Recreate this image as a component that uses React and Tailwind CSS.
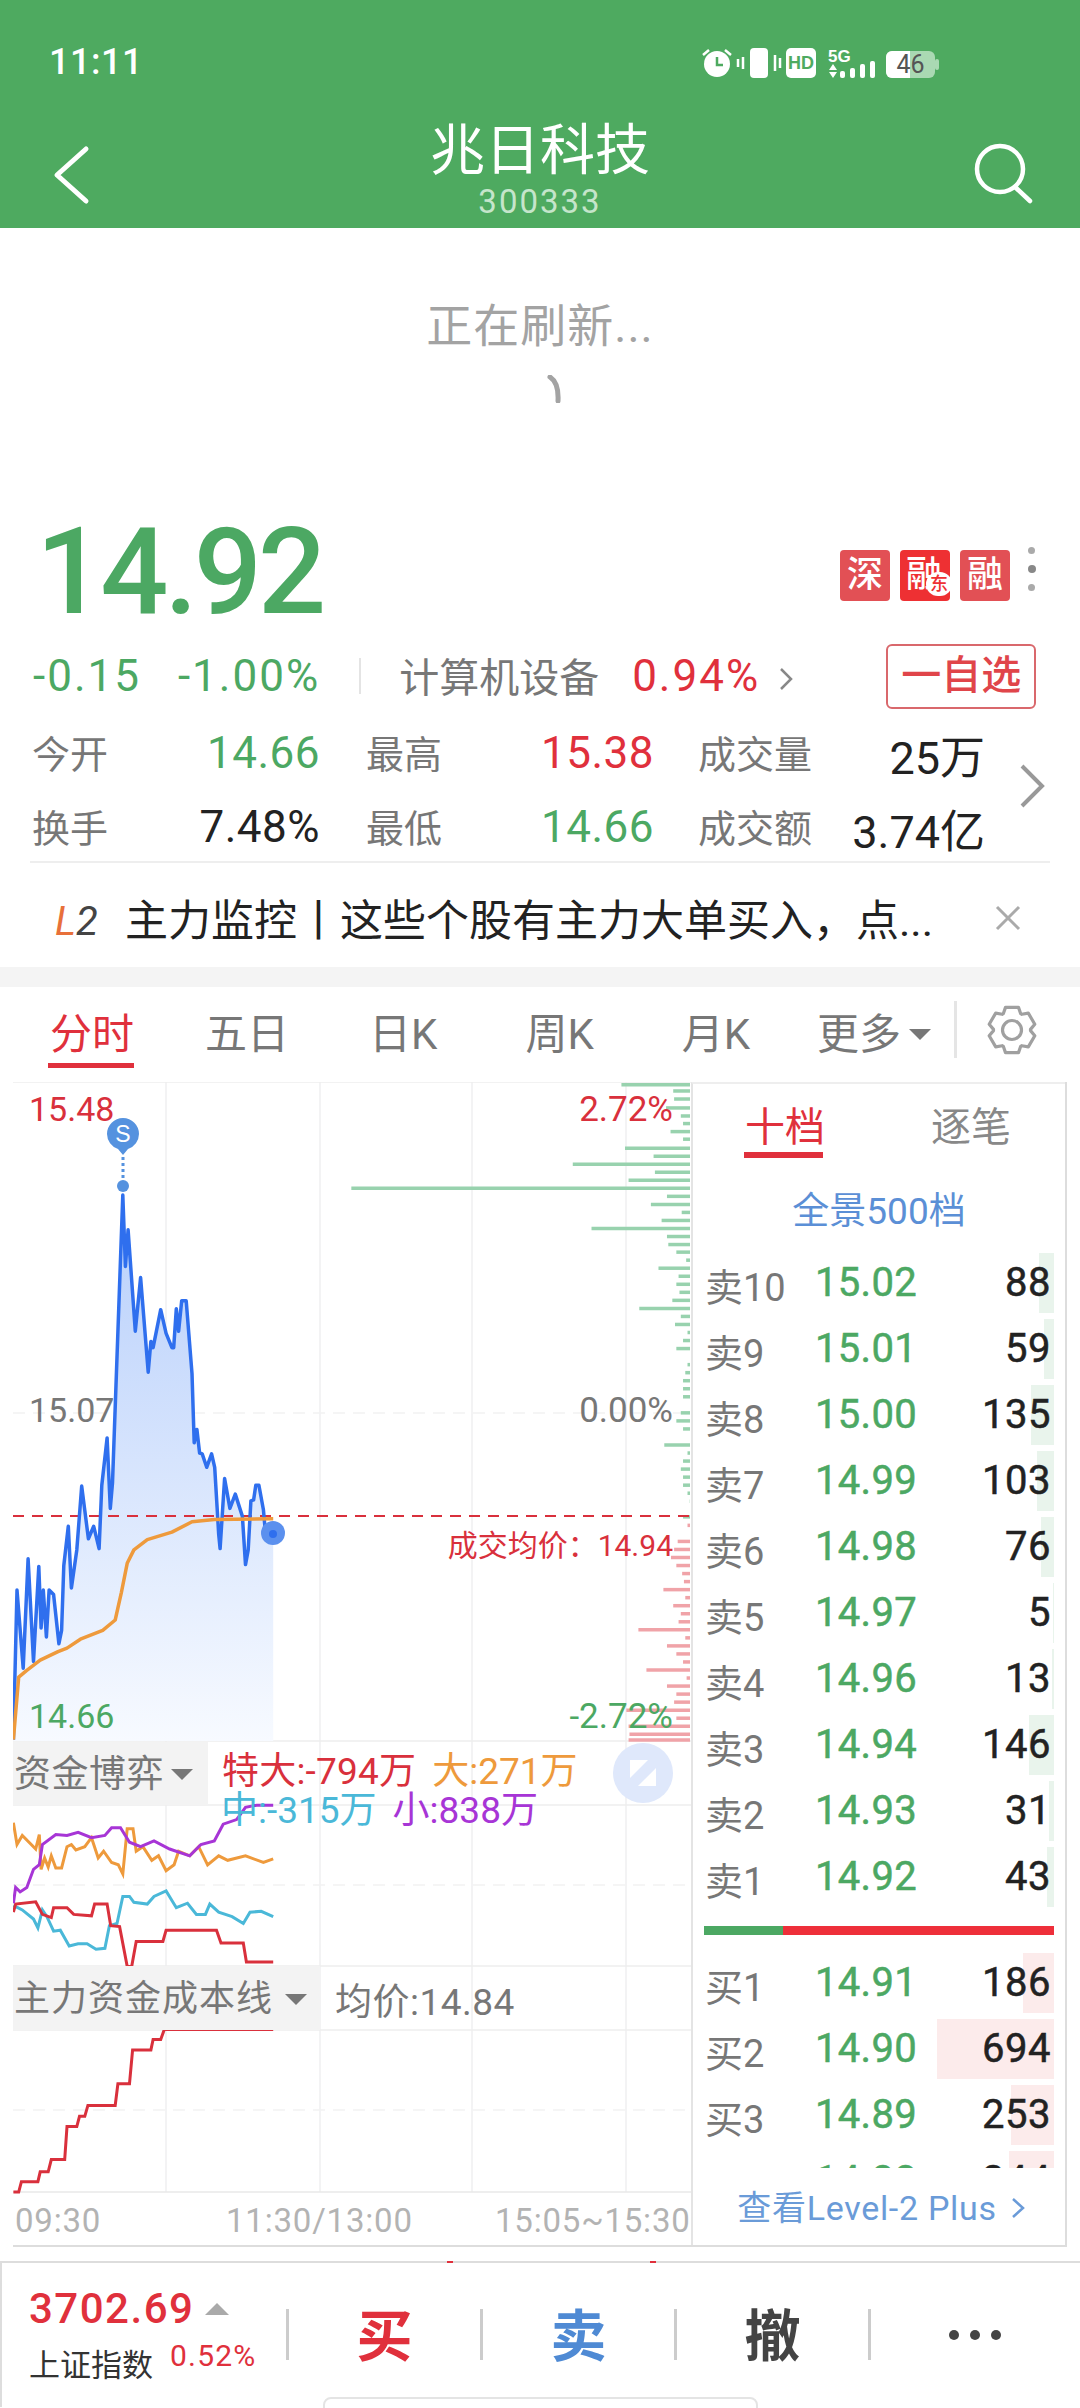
import React from "react";

const FONT = "font-['Roboto','Noto_Sans_CJK_SC',sans-serif]";

const p1 = (a) => a.map(([x, y]) => `${(x / 2.24 - 13).toFixed(1)},${(y / 2.24 + 1070 - 1082).toFixed(1)}`).join(" ");
const p2 = (a) => a.map(([x, y]) => `${(x / 2.24 - 13).toFixed(1)},${(y / 2.215 + 1700 - 1082).toFixed(1)}`).join(" ");

const gearPts = (() => {
  const out = [];
  for (let k = 0; k < 6; k++) {
    const a = -90 + k * 60;
    [[-28, 18.5], [-16, 23.5], [16, 23.5], [28, 18.5]].forEach(([d, r]) => {
      const t = ((a + d) * Math.PI) / 180;
      out.push(`${(25 + r * Math.cos(t)).toFixed(1)},${(25 + r * Math.sin(t)).toFixed(1)}`);
    });
  }
  return out.join(" ");
})();

const price = [[30,1500],[38,1165],[52,1340],[63,1095],[75,1325],[87,1112],[92,1250],[97,1165],[104,1270],[110,1165],[120,1175],[132,1285],[138,1255],[143,1110],[153,1022],[160,1160],[172,1075],[183,932],[198,1050],[210,1022],[222,1072],[228,930],[240,824],[247,982],[252,925],[275,280],[281,440],[287,358],[303,585],[315,465],[332,677],[338,608],[343,622],[360,537],[372,590],[385,622],[389,622],[395,535],[400,585],[407,517],[417,517],[430,680],[435,835],[441,805],[447,858],[453,860],[463,890],[474,860],[481,890],[490,1040],[493,1072],[503,915],[515,982],[527,950],[543,1000],[550,1108],[556,1075],[562,965],[568,963],[573,930],[580,930],[590,985],[594,1030],[612,1040]];
const avg = [[30,1500],[42,1360],[60,1345],[90,1322],[130,1303],[150,1295],[180,1275],[230,1255],[258,1232],[272,1170],[285,1105],[300,1075],[330,1052],[385,1035],[430,1012],[480,1007],[612,1005]];
const greenBars = [[33,1392],[47,1508],[65,1510],[85,1492],[103,1525],[120,1530],[138,1502],[155,1530],[175,1400],[193,1464],[211,1283],[229,1467],[247,1408],[265,787],[283,1494],[301,1458],[319,1527],[337,1482],[355,1325],[373,1494],[391,1497],[408,1515],[426,1537],[444,1475],[462,1520],[480,1515],[498,1522],[516,1506],[534,1432],[552,1525],[570,1512],[588,1540],[606,1530],[624,1515],[660,1540],[678,1535],[696,1530],[714,1530],[732,1530],[768,1525],[786,1515],[804,1530],[840,1488],[858,1540],[876,1530],[894,1525],[912,1530],[930,1530],[948,1540],[966,1545],[1001,1530]];
const redBars = [[1020,1540],[1056,1518],[1074,1510],[1092,1503],[1110,1515],[1128,1528],[1146,1532],[1164,1486],[1182,1535],[1200,1508],[1218,1525],[1236,1520],[1254,1430],[1272,1535],[1290,1494],[1308,1515],[1326,1530],[1344,1448],[1362,1538],[1380,1494],[1398,1515],[1416,1510],[1434,1403],[1452,1515],[1470,1408],[1488,1410],[1501,1408]];
const orange = [[30,272],[38,320],[50,300],[65,315],[80,330],[88,298],[92,375],[100,350],[108,370],[115,345],[125,372],[138,372],[150,325],[160,320],[170,332],[190,325],[205,305],[220,350],[232,335],[250,360],[265,365],[275,385],[285,285],[298,285],[305,335],[320,325],[340,355],[355,345],[372,378],[390,365],[400,335],[425,345],[445,325],[465,365],[490,345],[510,355],[550,345],[590,360],[612,352]];
const purple = [[30,450],[35,415],[45,425],[60,415],[75,375],[88,365],[95,320],[125,298],[150,300],[175,293],[205,305],[235,300],[250,283],[270,283],[290,315],[315,325],[345,312],[380,330],[425,345],[450,320],[480,312],[500,275],[530,265],[550,238],[575,233],[612,233]];
const cyan = [[30,455],[50,465],[75,485],[85,505],[95,465],[105,480],[120,512],[135,510],[155,545],[175,540],[195,540],[215,552],[235,550],[245,500],[262,495],[275,435],[290,435],[300,448],[330,452],[345,435],[372,423],[395,460],[420,450],[440,475],[460,475],[470,452],[490,470],[520,480],[545,495],[560,470],[585,468],[612,480]];
const red = [[30,470],[35,452],[80,447],[95,475],[115,482],[120,460],[150,460],[165,475],[205,478],[212,452],[240,452],[248,500],[268,502],[285,590],[295,590],[305,535],[365,535],[372,510],[485,510],[495,538],[545,538],[552,580],[612,580]];
const stair = [[30,1090],[42,1090],[48,1067],[85,1067],[90,1045],[108,1045],[115,1018],[145,1018],[150,945],[172,945],[178,922],[190,922],[197,898],[258,898],[264,850],[290,850],[297,775],[338,775],[343,752],[360,752],[368,730],[612,730]];

const asks = [["卖10","15.02","88",15],["卖9","15.01","59",10],["卖8","15.00","135",23],["卖7","14.99","103",17],["卖6","14.98","76",13],["卖5","14.97","5",1],["卖4","14.96","13",2],["卖3","14.94","146",25],["卖2","14.93","31",5],["卖1","14.92","43",7]];
const bids = [["买1","14.91","186",31],["买2","14.90","694",117],["买3","14.89","253",43],["买4","14.88","244",45]];

function ChartSvg() {
  const vx = [153, 307, 459, 613];
  const hLines = [[1082,"#eeeeee",""],[1413,"#f2f2f2","12 8"],[1741,"#eeeeee",""],[1805,"#eeeeee",""],[1885,"#f2f2f2","12 8"],[1966,"#eeeeee",""],[2030,"#eeeeee",""],[2110,"#f2f2f2","12 8"],[2192,"#e8e8e8",""]];
  const fillPts = p1(price) + ` ${612 / 2.24 - 13},${1741 - 1082} ${30 / 2.24 - 13},${1741 - 1082}`;
  return (
    <svg className="absolute left-0 top-0" width="678" height="1163" viewBox="0 0 678 1163">
      <defs>
        <linearGradient id="areaFill" x1="0" y1="0" x2="0" y2="1">
          <stop offset="0" stopColor="#b7cffb" />
          <stop offset="1" stopColor="#f7faff" />
        </linearGradient>
        <clipPath id="p2clip"><rect x="0" y="723" width="678" height="161" /></clipPath>
      </defs>
      {vx.map((x) => <line key={x} x1={x} x2={x} y1="0" y2="1110" stroke="#efeff1" strokeWidth="1.5" />)}
      {hLines.map(([y, c, d]) => <line key={y} x1="0" x2="678" y1={y - 1082} y2={y - 1082} stroke={c} strokeWidth="1.5" strokeDasharray={d} />)}
      {greenBars.map(([y, x]) => <line key={y} x1={x / 2.24 - 13} x2="677" y1={y / 2.24 - 12} y2={y / 2.24 - 12} stroke="#98d2ae" strokeWidth="3.5" />)}
      {redBars.map(([y, x]) => <line key={y} x1={x / 2.24 - 13} x2="677" y1={y / 2.24 - 12} y2={y / 2.24 - 12} stroke="#f0a3a8" strokeWidth="3.5" />)}
      <polygon points={fillPts} fill="url(#areaFill)" />
      <line x1="0" x2="677" y1="434" y2="434" stroke="#d9303c" strokeWidth="2" strokeDasharray="11 8" />
      <polyline points={p1(price)} fill="none" stroke="#2f6fee" strokeWidth="3.5" strokeLinejoin="round" />
      <polyline points={p1(avg)} fill="none" stroke="#ee9a3c" strokeWidth="3.5" strokeLinejoin="round" />
      <circle cx="260" cy="451" r="12" fill="#5b90ee" />
      <circle cx="260" cy="452" r="4" fill="#2f6fee" />
      <path d="M94 52 a16 16 0 1 1 32 0 a16 16 0 0 1 -11 15 l-5 6 l-5 -6 a16 16 0 0 1 -11 -15z" fill="#5592df" />
      <text x="110" y="60" textAnchor="middle" fontSize="23" fontWeight="500" fill="#ffffff" fontFamily="Liberation Sans, sans-serif">S</text>
      <line x1="110" x2="110" y1="75" y2="98" stroke="#5592df" strokeWidth="3" strokeDasharray="3 3" />
      <circle cx="110" cy="104" r="6" fill="#5592df" />
      <g clipPath="url(#p2clip)">
        <polyline points={p2(orange)} fill="none" stroke="#ee9a3c" strokeWidth="3" />
        <polyline points={p2(cyan)} fill="none" stroke="#4ab8d8" strokeWidth="3" />
        <polyline points={p2(red)} fill="none" stroke="#d9303c" strokeWidth="3" />
      </g>
      <polyline points={p2(purple)} fill="none" stroke="#a735d6" strokeWidth="3" />
      <polyline points={p2(stair)} fill="none" stroke="#d9303c" strokeWidth="3" />
    </svg>
  );
}

function Caret({ className }) {
  return <span className={`inline-block w-0 h-0 border-x-[11px] border-x-transparent border-t-[11px] border-t-[#777777] ${className || ""}`} />;
}

function BookRow({ label, p, q, w, bg }) {
  return (
    <div className="relative h-[66px] flex items-center">
      <div className={`absolute right-[11px] top-[3px] bottom-[3px] ${bg}`} style={{ width: w }} />
      <span className="relative w-[122px] pl-[12px] pt-[10px] text-[38px] leading-none text-[#777777] whitespace-nowrap">{label}</span>
      <span className="relative text-[40px] leading-none text-[#4ca863] [-webkit-text-stroke:0.5px_#4ca863] tracking-[0.3px]">{p}</span>
      <span className="relative ml-auto pr-[14px] text-[40px] leading-none text-[#222222] [-webkit-text-stroke:0.5px_#222222] tracking-[0.5px]">{q}</span>
    </div>
  );
}

export default function App() {
  return (
    <div className={`${FONT} relative w-[1080px] h-[2408px] bg-white overflow-hidden`}>
      {/* header */}
      <header className="relative h-[228px] bg-[#4eaa60] text-white">
        <div className="flex items-center h-[38px] pt-[62px] pl-[49px]">
          <span className="text-[36px] leading-none font-medium tracking-[0.5px]">11:11</span>
        </div>
        <svg className="absolute left-[700px] top-[40px]" width="240" height="44" viewBox="700 40 240 44">
          <circle cx="717" cy="64" r="13" fill="#fff" />
          <path d="M717 57 v8 h6" fill="none" stroke="#4eaa60" strokeWidth="2.5" />
          <path d="M703 55 l6 -5 M731 55 l-6 -5" stroke="#fff" strokeWidth="2.5" />
          <rect x="750" y="48" width="18" height="30" rx="4" fill="#fff" />
          <path d="M743 57 v12 M775 55 v16 M780 58 v10 M738 59 v8" stroke="#fff" strokeWidth="2.5" />
          <rect x="786" y="48" width="30" height="30" rx="5" fill="#fff" />
          <text x="801" y="69" textAnchor="middle" fontSize="18" fontWeight="700" fill="#4eaa60" fontFamily="Liberation Sans, sans-serif">HD</text>
          <text x="828" y="62" fontSize="17" fontWeight="700" fill="#fff" fontFamily="Liberation Sans, sans-serif">5G</text>
          <path d="M829 70 l4 -6 l4 6z M829 72 h8 l-4 6z" fill="#fff" />
          <rect x="840" y="71" width="5" height="7" rx="2" fill="#fff" />
          <rect x="850" y="68" width="5" height="10" rx="2" fill="#fff" />
          <rect x="860" y="64" width="5" height="14" rx="2" fill="#fff" />
          <rect x="870" y="61" width="5" height="17" rx="2" fill="#fff" />
          <rect x="935" y="59" width="4" height="11" rx="2" fill="#aad9b3" />
        </svg>
        <div className="absolute left-[886px] top-[51px] w-[49px] h-[27px] rounded-[6px] bg-[#aad9b3] overflow-hidden flex items-center justify-center">
          <div className="absolute left-0 top-0 bottom-0 w-[24px] bg-white" />
          <span className="relative text-[25px] leading-none text-[#555555]">46</span>
        </div>
        <div className="absolute left-0 right-0 top-[120px] flex flex-col items-center">
          <span className="text-[55px] leading-[60px]">兆日科技</span>
          <span className="text-[33px] leading-[33px] text-[#c5e5cb] tracking-[2px] mt-[5px]">300333</span>
        </div>
        <svg className="absolute left-[50px] top-[141px]" width="44" height="68" viewBox="0 0 44 68">
          <path d="M36 8 L7 34 L36 60" fill="none" stroke="#fff" strokeWidth="5" strokeLinecap="round" strokeLinejoin="round" />
        </svg>
        <svg className="absolute left-[969px] top-[140px]" width="70" height="70" viewBox="970 140 70 70">
          <circle cx="1001" cy="169" r="23" fill="none" stroke="#fff" strokeWidth="4.5" />
          <path d="M1016 187 L1031 201" stroke="#fff" strokeWidth="4.5" strokeLinecap="round" />
        </svg>
      </header>

      {/* refresh */}
      <div className="h-[272px] flex flex-col items-center pt-[73px]">
        <span className="text-[46px] leading-[50px] text-[#a3a3a3] tracking-[1px]">正在刷新...</span>
        <svg className="mt-[24px] ml-[30px]" width="16" height="28" viewBox="0 0 16 28">
          <path d="M3 2 Q12 8 11 26" fill="none" stroke="#a3a3a3" strokeWidth="5" strokeLinecap="round" />
        </svg>
      </div>

      {/* quote */}
      <section className="relative h-[467px]">
        <div className="flex items-start pl-[36px] pt-[12px] h-[137px]">
          <span className="text-[120px] leading-[120px] font-medium text-[#4ca863] tracking-[-4px]">14.92</span>
          <div className="ml-auto mr-[70px] mt-[38px] flex gap-[10px] relative">
            <span className="w-[50px] h-[51px] rounded-[4px] bg-[#e25055] text-white text-[36px] font-medium leading-[51px] text-center">深</span>
            <span className="relative w-[50px] h-[51px] rounded-[4px] bg-[#ee3033] text-white text-[36px] font-medium leading-[51px] text-center">
              <span className="absolute left-[6px] top-0">融</span>
              <span className="absolute -right-[2px] bottom-[5px] w-[26px] h-[24px] rounded-full bg-white text-[#ee3033] text-[18px] leading-[24px]">东</span>
            </span>
            <span className="w-[50px] h-[51px] rounded-[4px] bg-[#e25055] text-white text-[36px] font-medium leading-[51px] text-center">融</span>
          </div>
          <div className="absolute left-[1028px] top-[47px] flex flex-col gap-[11px]">
            <span className="w-[7px] h-[7px] rounded-full bg-[#aaaaaa]" />
            <span className="w-[8px] h-[8px] rounded-full bg-[#888888]" />
            <span className="w-[7px] h-[7px] rounded-full bg-[#aaaaaa]" />
          </div>
        </div>

        <div className="flex items-center h-[66px] pl-[33px] mt-[6px]">
          <span className="text-[44px] leading-none text-[#4ca863] tracking-[2px]">-0.15</span>
          <span className="ml-[37px] text-[44px] leading-none text-[#4ca863] tracking-[2px]">-1.00%</span>
          <span className="ml-[39px] w-[2px] h-[36px] bg-[#e4e4e4]" />
          <span className="ml-[38px] text-[40px] leading-none text-[#777777] mt-[6px]">计算机设备</span>
          <span className="ml-[33px] text-[44px] leading-none text-[#e0303c] tracking-[2px]">0.94%</span>
          <svg className="ml-[18px] mt-[6px]" width="16" height="26" viewBox="0 0 16 26">
            <path d="M3 3 L13 13 L3 23" fill="none" stroke="#888888" strokeWidth="2.5" />
          </svg>
          <span className="ml-[92px] w-[150px] h-[65px] border-2 border-[#d9686c] rounded-[6px] flex items-center justify-center text-[40px] leading-none font-medium text-[#e0454a]">一自选</span>
        </div>

        <div className="relative pl-[32px] pt-[24px] w-[985px] h-[128px] box-content">
          {[["今开","14.66","text-[#4ca863]","最高","15.38","text-[#e0303c]","成交量","25万"],["换手","7.48%","text-[#222222]","最低","14.66","text-[#4ca863]","成交额","3.74亿"]].map((r) => (
            <div key={r[0]} className="flex h-[74px] items-start">
              <div className="w-[288px] flex justify-between items-start">
                <span className="text-[38px] leading-[44px] text-[#777777]">{r[0]}</span>
                <span className={`text-[44px] leading-[40px] tracking-[0.5px] ${r[2]}`}>{r[1]}</span>
              </div>
              <div className="ml-[46px] w-[288px] flex justify-between items-start">
                <span className="text-[38px] leading-[44px] text-[#777777]">{r[3]}</span>
                <span className={`text-[44px] leading-[40px] tracking-[0.5px] ${r[5]}`}>{r[4]}</span>
              </div>
              <div className="ml-[44px] w-[287px] flex justify-between items-start">
                <span className="text-[38px] leading-[44px] text-[#777777]">{r[6]}</span>
                <span className="text-[45px] leading-[52px] text-[#222222]">{r[7]}</span>
              </div>
            </div>
          ))}
          <svg className="absolute left-[1017px] top-[53px]" width="30" height="48" viewBox="0 0 30 48">
            <path d="M5 4 L25 24 L5 44" fill="none" stroke="#999999" strokeWidth="4" />
          </svg>
        </div>

        <div className="mx-[30px] h-[2px] bg-[#eeeeee]" />
        <div className="flex items-center h-[117px] pl-[55px]">
          <span className="text-[40px] leading-none italic w-[70px]"><span className="text-[#e8703a]">L</span><span className="text-[#444444]">2</span></span>
          <span className="text-[43px] leading-none text-[#222222] whitespace-nowrap">主力监控丨这些个股有主力大单买入，点...</span>
          <svg className="absolute left-[994px] top-[404px]" width="28" height="28" viewBox="0 0 28 28">
            <path d="M3 3 L25 25 M25 3 L3 25" stroke="#aaaaaa" strokeWidth="3" />
          </svg>
        </div>
      </section>

      <div className="h-[20px] bg-[#f4f4f4]" />

      {/* tabs */}
      <nav className="relative h-[95px] flex items-center pl-[50px] text-[42px] leading-none text-[#777777]">
        <span className="text-[#e0303c]">分时</span>
        <span className="ml-[71px]">五日</span>
        <span className="ml-[80px]">日K</span>
        <span className="ml-[88px]">周K</span>
        <span className="ml-[88px]">月K</span>
        <span className="ml-[67px]">更多</span>
        <Caret className="ml-[8px]" />
        <span className="ml-[23px] w-[3px] h-[57px] bg-[#e5e5e5] mb-[10px]" />
        <svg className="ml-[30px] mb-[10px]" width="50" height="50" viewBox="0 0 50 50" fill="none" stroke="#a0a0a0" strokeWidth="3.2" strokeLinejoin="round">
          <polygon points={gearPts} />
          <circle cx="25" cy="25" r="9.5" />
        </svg>
        <span className="absolute left-[48px] top-[76px] w-[86px] h-[5px] bg-[#e0303c]" />
      </nav>

      {/* chart + book */}
      <main className="ml-[13px] w-[1054px] h-[1165px] flex border-b-2 border-b-[#dddddd] border-r-2 border-r-[#dddddd]">
        <div className="relative w-[678px] h-[1163px] shrink-0">
          <ChartSvg />
          <span className="absolute left-[16px] top-[10px] text-[34px] leading-none text-[#d9303c]">15.48</span>
          <span className="absolute left-[16px] top-[311px] text-[34px] leading-none text-[#777777]">15.07</span>
          <span className="absolute left-[16px] top-[617px] text-[34px] leading-none text-[#4ca863]">14.66</span>
          <span className="absolute right-[18px] top-[10px] text-[35px] leading-none text-[#d9303c]">2.72%</span>
          <span className="absolute right-[18px] top-[311px] text-[35px] leading-none text-[#777777]">0.00%</span>
          <span className="absolute right-[18px] top-[617px] text-[35px] leading-none text-[#4ca863]">-2.72%</span>
          <span className="absolute right-[18px] top-[449px] text-[30px] leading-none text-[#d9303c] whitespace-nowrap">成交均价：14.94</span>

          <div className="absolute left-0 top-[660px] w-[195px] h-[63px] bg-[#f3f3f3] flex items-center pl-[1px] pt-[2px] text-[37px] leading-none text-[#777777]">
            <span className="tracking-[0.5px]">资金博弈</span><Caret className="ml-[7px]" />
          </div>
          <div className="absolute left-[209px] top-[671px] flex gap-[16px] text-[37px] leading-none whitespace-nowrap">
            <span className="text-[#d9303c] tracking-[0.2px]">特大:-794万</span><span className="text-[#ee9a3c]">大:271万</span>
          </div>
          <div className="absolute left-[208px] top-[710px] flex gap-[16px] text-[37px] leading-none whitespace-nowrap">
            <span className="text-[#4ab8d8]">中:-315万</span><span className="text-[#a735d6]">小:838万</span>
          </div>
          <div className="absolute left-[600px] top-[661px] w-[60px] h-[60px] rounded-full bg-[#dfe8fb] flex items-center justify-center">
            <svg width="28" height="28" viewBox="0 0 28 28"><path d="M1 1 h18 l-18 18z M27 27 h-18 l18 -18z" fill="#fff" /></svg>
          </div>

          <div className="absolute left-0 top-[884px] w-[307px] h-[64px] bg-[#f3f3f3] flex items-center pl-[1px] pt-[2px] text-[36px] leading-none text-[#777777]">
            <span className="tracking-[1px]">主力资金成本线</span><Caret className="ml-[12px]" />
          </div>
          <span className="absolute left-[322px] top-[902px] text-[37px] leading-none text-[#777777] tracking-[0.5px]">均价:14.84</span>

          <div className="absolute left-[2px] top-[1122px] flex text-[33px] leading-none text-[#b3b3b3] tracking-[0.8px] whitespace-nowrap">
            <span className="w-[211px]">09:30</span><span className="w-[269px]">11:30/13:00</span><span>15:05~15:30</span>
          </div>
        </div>

        <aside className="flex-1 border-l-2 border-l-[#e4e4e4] border-t-2 border-t-[#eeeeee] flex flex-col min-w-0">
          <div className="relative h-[76px] flex pl-[52px] pt-[24px] text-[40px] leading-none">
            <span className="text-[#e0303c]">十档</span>
            <span className="ml-[106px] text-[#888888]">逐笔</span>
            <span className="absolute left-[51px] top-[68px] w-[79px] h-[6px] bg-[#e0303c]" />
          </div>
          <div className="h-[90px] text-center pt-[33px] text-[37px] leading-none text-[#5b8fd6]">全景500档</div>
          <div>
            {asks.map(([l, p, q, w]) => <BookRow key={l} label={l} p={p} q={q} w={w} bg="bg-[#e9f4ec]" />)}
          </div>
          <div className="mt-[16px] mb-[15px] ml-[11px] mr-[11px] h-[9px] flex">
            <div className="w-[79px] bg-[#4ca863]" />
            <div className="flex-1 bg-[#ee2f3a]" />
          </div>
          <div className="h-[218px] overflow-hidden">
            {bids.map(([l, p, q, w]) => <BookRow key={l} label={l} p={p} q={q} w={w} bg="bg-[#fcebeb]" />)}
          </div>
          <div className="flex-1 flex items-center justify-center pl-[4px] pt-[2px] text-[34px] leading-none text-[#6a9bd8]">
            <span className="tracking-[0.7px]">查看Level-2 Plus</span>
            <svg className="ml-[14px]" width="14" height="26" viewBox="0 0 14 26"><path d="M2 4 L12 13 L2 22" fill="none" stroke="#6a9bd8" strokeWidth="2.5" /></svg>
          </div>
        </aside>
      </main>

      {/* bottom bar */}
      <footer className="mt-[14px] h-[146px] border-t-2 border-t-[#dddddd] border-l-2 border-l-[#dddddd] flex items-start relative">
        <span className="absolute left-[445px] -top-[2px] w-[6px] h-[2px] bg-[#e0303c]" />
        <span className="absolute left-[648px] -top-[2px] w-[6px] h-[2px] bg-[#e0303c]" />
        <div className="w-[284px] pl-[27px] pt-[25px] shrink-0">
          <div className="flex items-center">
            <span className="text-[42px] leading-none font-medium text-[#e0303c] tracking-[1.5px]">3702.69</span>
            <span className="ml-[11px] w-0 h-0 border-x-[12px] border-x-transparent border-b-[12px] border-b-[#aaaaaa]" />
          </div>
          <div className="flex items-start mt-[11px]">
            <span className="text-[31px] leading-none text-[#333333] mt-[9px]">上证指数</span>
            <span className="ml-[17px] text-[30px] leading-none text-[#e0303c] tracking-[1.2px]">0.52%</span>
          </div>
        </div>
        {[["买","text-[#e0303c]"],["卖","text-[#4f8ad4]"],["撤","text-[#444444]"]].map(([t, c]) => (
          <div key={t} className="w-[194px] h-[100px] mt-[46px] flex items-start shrink-0">
            <span className="w-[3px] h-[51px] bg-[#cccccc]" />
            <span className={`flex-1 text-center text-[56px] leading-[56px] font-bold ${c}`}>{t}</span>
          </div>
        ))}
        <div className="flex-1 h-[100px] mt-[46px] flex items-start">
          <span className="w-[3px] h-[51px] bg-[#cccccc]" />
          <div className="flex gap-[11px] ml-[78px] mt-[21px]">
            <span className="w-[10px] h-[10px] rounded-full bg-[#444444]" />
            <span className="w-[10px] h-[10px] rounded-full bg-[#444444]" />
            <span className="w-[10px] h-[10px] rounded-full bg-[#444444]" />
          </div>
        </div>
      </footer>
      <div className="absolute left-[323px] top-[2397px] w-[435px] h-[20px] rounded-[8px] border-2 border-[#e4e4e4]" />
    </div>
  );
}
